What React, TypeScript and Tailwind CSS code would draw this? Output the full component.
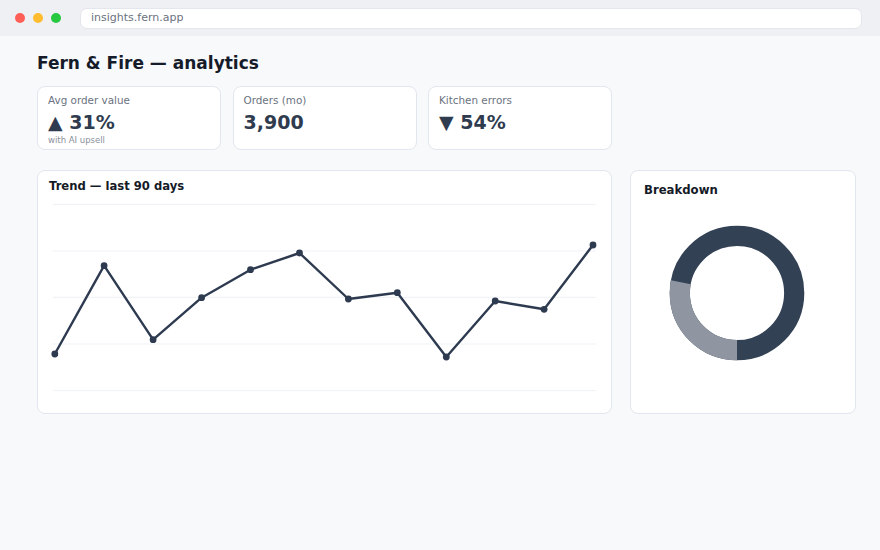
import React from "react";

const pts: [number, number][] = [
  [54.8, 354],
  [104.1, 265.7],
  [153.1, 339.7],
  [201.6, 297.7],
  [250.5, 269.7],
  [299.5, 253],
  [348.4, 299],
  [397.3, 292.7],
  [446.3, 357],
  [495.2, 301],
  [544.1, 309.3],
  [593, 245],
];

function Kpi({ label, value, sub }: { label: string; value: string; sub?: string }) {
  return (
    <div className="w-[184px] h-[64px] bg-white border border-[#e2e6ee] rounded-[8px] px-[10px] pt-[6px]">
      <div className="text-[10.4px] leading-[14px] text-[#6b7280]">{label}</div>
      <div className="text-[19px] leading-[26px] font-bold text-[#2f3b4e] mt-[2px]">{value}</div>
      {sub && <div className="text-[8.5px] leading-[11px] text-[#8a909a]">{sub}</div>}
    </div>
  );
}

function Trend() {
  const ox = 49;
  const oy = 193;
  const lines = [204.3, 251, 297.3, 344, 390.7];
  const d = pts.map((p, i) => `${i === 0 ? "M" : "L"}${(p[0] - ox).toFixed(1)} ${(p[1] - oy).toFixed(1)}`).join(" ");
  return (
    <div className="w-[575px] h-[244px] bg-white border border-[#e2e6ee] rounded-[8px] pl-[11px] pt-[7px] flex flex-col">
      <div className="text-[11.6px] leading-[16px] font-bold text-[#151a27]">Trend — last 90 days</div>
      <svg width="552" height="212" className="mt-[-1px] block" viewBox="0 0 552 212">
        {lines.map((y) => (
          <line key={y} x1={52.6 - ox} x2={595.7 - ox} y1={y - oy} y2={y - oy} stroke="#edf1f6" strokeWidth="1" />
        ))}
        <path d={d} fill="none" stroke="#2d3a4f" strokeWidth="2.4" strokeLinejoin="round" />
        {pts.map((p, i) => (
          <circle key={i} cx={p[0] - ox} cy={p[1] - oy} r="3.4" fill="#2d3a4f" />
        ))}
      </svg>
    </div>
  );
}

function Donut() {
  const r = 57.2;
  const c = 2 * Math.PI * r;
  const grayFrac = 100.7 / 360;
  return (
    <svg width="136" height="136" viewBox="0 0 136 136" className="block">
      <circle cx="68" cy="68" r={r} fill="none" stroke="#334155" strokeWidth="20.2" />
      <circle
        cx="68"
        cy="68"
        r={r}
        fill="none"
        stroke="#8f96a1"
        strokeWidth="20.2"
        strokeDasharray={`${grayFrac * c} ${c}`}
        transform="rotate(90 68 68)"
      />
    </svg>
  );
}

function Breakdown() {
  return (
    <div className="w-[226px] h-[244px] bg-white border border-[#e2e6ee] rounded-[8px] pl-[13px] pt-[11px] flex flex-col">
      <div className="text-[11.7px] leading-[16px] font-bold text-[#151a27]">Breakdown</div>
      <div className="ml-[25px] mt-[27px]">
        <Donut />
      </div>
    </div>
  );
}

export default function App() {
  return (
    <div
      className="w-[880px] h-[550px] bg-[#f8f9fb] flex flex-col"
      style={{ fontFamily: '"DejaVu Sans", "Noto Sans", sans-serif' }}
    >
      <div className="h-[36px] bg-[#eff0f4] flex items-center shrink-0">
        <div className="flex items-center gap-[8px] ml-[15px]">
          <span className="w-[10px] h-[10px] rounded-full bg-[#fe5f57]" />
          <span className="w-[10px] h-[10px] rounded-full bg-[#febc2e]" />
          <span className="w-[10px] h-[10px] rounded-full bg-[#28c840]" />
        </div>
        <div className="ml-[19px] w-[782px] h-[21px] bg-white border border-[#e3e6ec] rounded-[7px] flex items-center pl-[10px] text-[11px] text-[#6b7280]">
          insights.fern.app
        </div>
      </div>
      <div className="pl-[37px] pt-[16px]">
        <div className="text-[17px] leading-[22px] font-bold text-[#161b2a]">Fern &amp; Fire — analytics</div>
        <div className="flex gap-[11.5px] mt-[12px]">
          <Kpi label="Avg order value" value="▲ 31%" sub="with AI upsell" />
          <Kpi label="Orders (mo)" value="3,900" />
          <Kpi label="Kitchen errors" value="▼ 54%" />
        </div>
        <div className="flex gap-[18px] mt-[20px]">
          <Trend />
          <Breakdown />
        </div>
      </div>
    </div>
  );
}
